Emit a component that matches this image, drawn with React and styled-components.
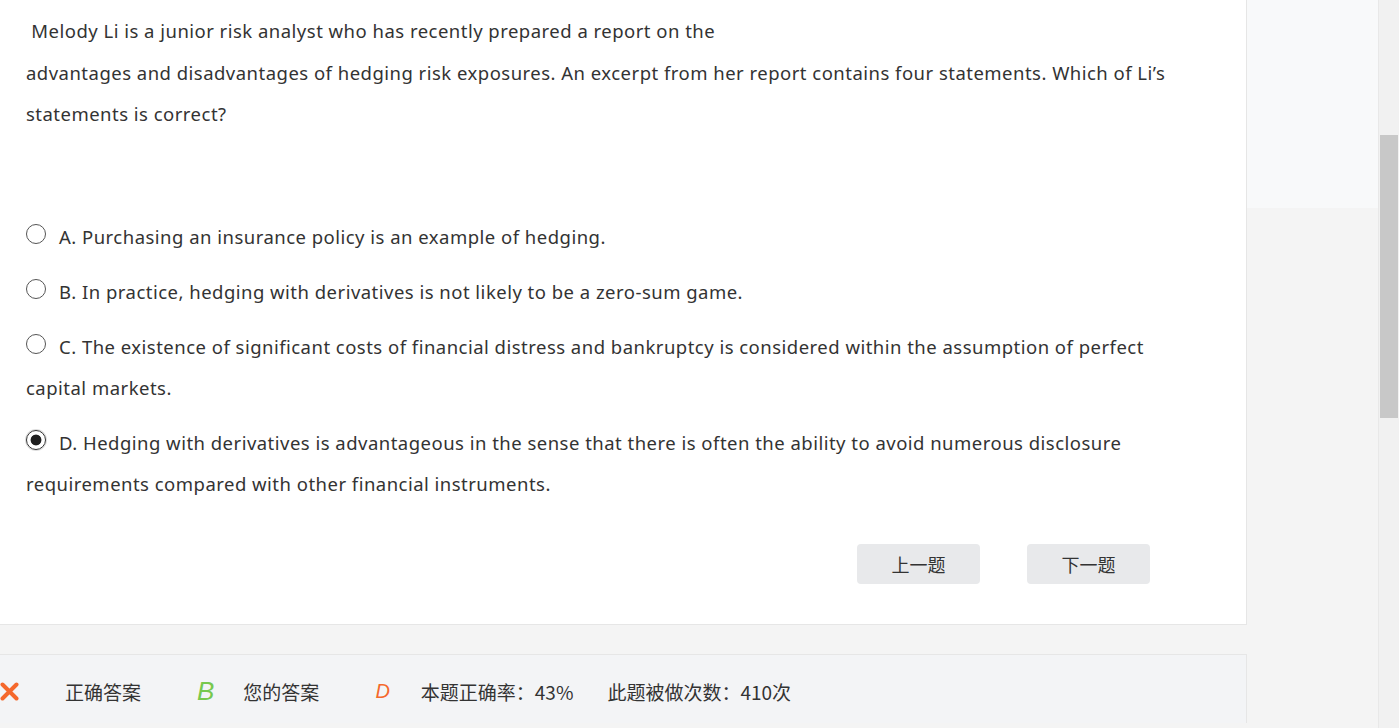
import React from 'react';
import styled, { createGlobalStyle } from 'styled-components';

const Global = createGlobalStyle`
  html, body {
    margin: 0;
    padding: 0;
    overflow: hidden;
    background: #f4f4f4;
  }
  body {
    font-family: "Noto Sans", "Noto Sans CJK SC", sans-serif;
    color: #333;
  }
`;

const Page = styled.div`
  display: flex;
  width: 1399px;
  height: 728px;
  background: #f4f4f4;
`;
const Main = styled.div`
  width: 1247px;
  display: flex;
  flex-direction: column;
`;
const Card = styled.div`
  height: 625px;
  box-sizing: border-box;
  background: #fff;
  border-right: 1px solid #e6e6e6;
  border-bottom: 1px solid #e6e6e6;
  padding: 10px 0 0 26px;
  display: flex;
  flex-direction: column;
`;
const Question = styled.div`
  font-size: 18.5px;
  letter-spacing: 0.48px;
  line-height: 41.5px;
  white-space: pre-wrap;
`;
const Options = styled.div`
  margin-top: 81px;
  display: flex;
  flex-direction: column;
  gap: 14px;
`;
const Option = styled.div`
  font-size: 18.5px;
  letter-spacing: 0.48px;
  line-height: 41px;
`;
const Radio = styled.span`
  display: inline-block;
  width: 20px;
  height: 20px;
  box-sizing: border-box;
  border-radius: 50%;
  border: 1px solid ${(p) => (p.$checked ? '#333' : '#555')};
  background: ${(p) => (p.$checked ? 'radial-gradient(circle, #1e1e1e 0 5px, #fff 5.8px)' : '#fff')};
  box-shadow: ${(p) => (p.$checked ? '0 0 0 1px #ddd' : 'none')};
  margin-right: 13px;
  vertical-align: baseline;
`;
const ButtonRow = styled.div`
  display: flex;
  justify-content: flex-end;
  gap: 47px;
  margin-top: 40px;
  padding-right: 96px;
`;
const NavButton = styled.button`
  width: 123px;
  height: 40px;
  border: none;
  border-radius: 4px;
  background: #e8e9eb;
  color: #333;
  font-family: "Noto Sans CJK SC", sans-serif;
  font-size: 18px;
  cursor: pointer;
`;
const Footer = styled.div`
  margin-top: 29px;
  height: 69px;
  box-sizing: border-box;
  background: #f3f4f6;
  border-top: 1px solid #e6e6e6;
  border-right: 1px solid #e6e6e6;
  display: flex;
  align-items: center;
  font-size: 19px;
  font-family: "Noto Sans CJK SC", sans-serif;
  padding-top: 4px;
`;
const Item = styled.span`
  margin-left: ${(p) => p.$ml}px;
  display: inline-flex;
  align-items: center;
`;
const Letter = styled.span`
  margin-left: ${(p) => p.$ml}px;
  font-family: "Liberation Sans", sans-serif;
  font-style: italic;
  font-size: ${(p) => p.$size}px;
  color: ${(p) => p.$color};
`;
const Side = styled.div`
  width: 131px;
  display: flex;
  flex-direction: column;
`;
const SideTop = styled.div`
  height: 208px;
  background: #f8f9fa;
`;
const Scrollbar = styled.div`
  width: 21px;
  box-sizing: border-box;
  background: #f1f1f1;
  border-left: 1px solid #e8e8e8;
  padding: 135px 1px 0 1px;
`;
const Thumb = styled.div`
  height: 283px;
  background: #c8c8c8;
`;

const options = [
  { key: 'A', text: 'A. Purchasing an insurance policy is an example of hedging.' },
  { key: 'B', text: 'B. In practice, hedging with derivatives is not likely to be a zero-sum game.' },
  {
    key: 'C',
    text: 'C. The existence of significant costs of financial distress and bankruptcy is considered within the assumption of perfect',
    more: 'capital markets.',
  },
  {
    key: 'D',
    text: 'D. Hedging with derivatives is advantageous in the sense that there is often the ability to avoid numerous disclosure',
    more: 'requirements compared with other financial instruments.',
    checked: true,
  },
];

const App = () => (
  <Page>
    <Global />
    <Main>
      <Card>
        <Question>
          {' Melody Li is a junior risk analyst who has recently prepared a report on the'}
          <br />
          advantages and disadvantages of hedging risk exposures. An excerpt from her report contains four statements. Which of Li’s
          <br />
          statements is correct?
        </Question>
        <Options>
          {options.map((o) => (
            <Option key={o.key}>
              <Radio $checked={o.checked} />
              {o.text}
              {o.more && (
                <>
                  <br />
                  {o.more}
                </>
              )}
            </Option>
          ))}
        </Options>
        <ButtonRow>
          <NavButton>上一题</NavButton>
          <NavButton>下一题</NavButton>
        </ButtonRow>
      </Card>
      <Footer>
        <Item $ml={0}>
          <svg width="19" height="19" viewBox="0 0 19 19">
            <path d="M2.5 2.5 L16.5 16.5 M16.5 2.5 L2.5 16.5" stroke="#f5682c" strokeWidth="4" strokeLinecap="round" />
          </svg>
        </Item>
        <Item $ml={46}>正确答案</Item>
        <Letter $ml={56} $size={26} $color="#77c84e">B</Letter>
        <Item $ml={29}>您的答案</Item>
        <Letter $ml={56} $size={20} $color="#f5682c">D</Letter>
        <Item $ml={31}>本题正确率：43%</Item>
        <Item $ml={34}>此题被做次数：410次</Item>
      </Footer>
    </Main>
    <Side>
      <SideTop />
    </Side>
    <Scrollbar>
      <Thumb />
    </Scrollbar>
  </Page>
);

export default App;
